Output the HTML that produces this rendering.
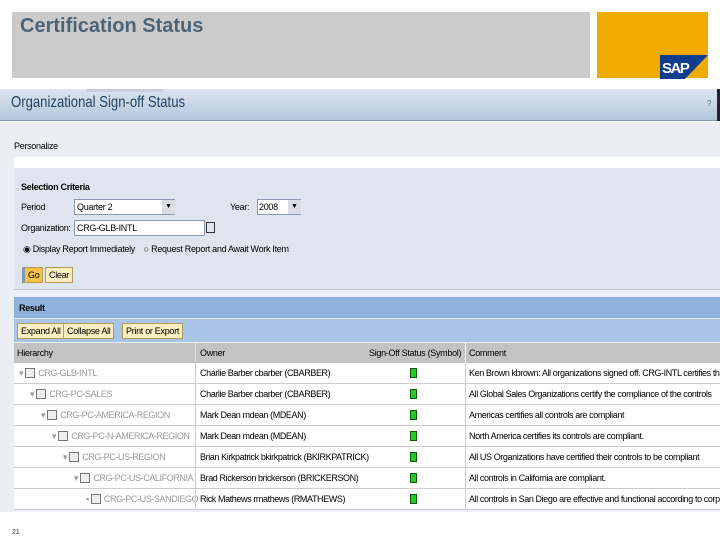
<!DOCTYPE html>
<html><head><meta charset="utf-8"><style>
*{margin:0;padding:0;box-sizing:border-box}
body{width:720px;height:540px;overflow:hidden;background:#fff;font-family:"Liberation Sans",sans-serif;position:relative}
.a{position:absolute}
.t{font-size:9px;color:#000;white-space:nowrap;letter-spacing:-0.3px}
.btn{position:absolute;background:#fbeec0;border:1px solid #b59b55;font-size:9px;height:16px;line-height:14px;padding:0 3px;letter-spacing:-0.3px}
.row{position:absolute;left:14px;width:706px;height:21px;border-bottom:1px solid #ccc;background:#fff}
.row div{position:absolute;top:0;height:20px;line-height:20px;font-size:9px;white-space:nowrap;letter-spacing:-0.4px}
.h{color:#999}
.cb{display:inline-block;width:10px;height:10px;border:1px solid #777;background:#eee;vertical-align:middle;margin-right:3px;margin-top:-2px}
.g{position:absolute;left:396px;top:5px;width:7px;height:10px;background:#22cc22;border:1px solid #115511}
.v1{position:absolute;left:181px;top:0;width:1px;height:21px;background:#ccc}
.v2{position:absolute;left:451px;top:0;width:1px;height:21px;background:#ccc}
</style></head><body>
<div class="a" style="left:12px;top:12px;width:578px;height:66px;background:#cbcbcb"></div>
<div class="a" style="left:20px;top:15px;font-size:20px;font-weight:bold;color:#4d6478">Certification Status</div>
<div class="a" style="left:597px;top:12px;width:111px;height:66px;background:#f0ab00"></div>
<svg class="a" style="left:660px;top:55px" width="48" height="24"><polygon points="0,0 48,0 25,24 0,24" fill="#103d8c"/><text x="2" y="18" font-family="Liberation Sans" font-weight="bold" font-size="15" fill="#fff" letter-spacing="-1.5">SAP</text></svg>
<div class="a" style="left:0;top:89px;width:720px;height:32px;background:linear-gradient(#dbe4ef,#b4c8de);border-bottom:1px solid #7f98b6"></div>
<div class="a" style="left:87px;top:89px;width:76px;height:3px;background:#c6cfdb"></div>
<div class="a" style="left:11px;top:94px;font-size:16px;color:#26435f;transform:scaleX(0.82);transform-origin:left">Organizational Sign-off Status</div>
<div class="a" style="left:707px;top:99px;font-size:8px;color:#5a6b80">?</div>
<div class="a" style="left:717px;top:89px;width:3px;height:32px;background:#223;"></div>
<div class="a" style="left:0;top:122px;width:720px;height:418px;background:#f4f5fa"></div>
<div class="a" style="left:0;top:122px;width:720px;height:390px;background:#eceef6"></div>
<div class="a t" style="left:14px;top:141px">Personalize</div>
<div class="a" style="left:14px;top:157px;width:706px;height:11px;background:#fff"></div>
<div class="a" style="left:14px;top:168px;width:706px;height:122px;background:#dfe5ee;border-bottom:1px solid #c0c8d4"></div>
<div class="a t" style="left:21px;top:182px;font-weight:bold">Selection Criteria</div>
<div class="a t" style="left:21px;top:202px">Period</div>
<div class="a" style="left:74px;top:199px;width:101px;height:16px;background:#fff;border:1px solid #8a99ad"></div>
<div class="a t" style="left:77px;top:202px">Quarter 2</div>
<div class="a" style="left:162px;top:200px;width:13px;height:14px;background:#d8dde6;font-size:7px;text-align:center;line-height:14px">▼</div>
<div class="a t" style="left:230px;top:202px">Year:</div>
<div class="a" style="left:257px;top:199px;width:44px;height:16px;background:#fff;border:1px solid #8a99ad"></div>
<div class="a t" style="left:259px;top:202px">2008</div>
<div class="a" style="left:288px;top:200px;width:13px;height:14px;background:#d8dde6;font-size:7px;text-align:center;line-height:14px">▼</div>
<div class="a t" style="left:21px;top:223px">Organization:</div>
<div class="a" style="left:74px;top:220px;width:131px;height:16px;background:#fff;border:1px solid #8a99ad"></div>
<div class="a t" style="left:77px;top:223px">CRG-GLB-INTL</div>
<div class="a" style="left:206px;top:222px;width:9px;height:11px;border:1px solid #333"></div>
<div class="a t" style="left:23px;top:244px">◉ Display Report Immediately &nbsp;&nbsp;&nbsp;○ Request Report and Await Work Item</div>
<div class="btn" style="left:22px;top:267px;background:#f6c24a;border-left:3px solid #7f98b6">Go</div>
<div class="btn" style="left:45px;top:267px">Clear</div>
<div class="a" style="left:14px;top:297px;width:706px;height:21px;background:#8fb2dc"></div>
<div class="a t" style="left:19px;top:303px;font-weight:bold">Result</div>
<div class="a" style="left:14px;top:318px;width:706px;height:24px;background:#a8c5e8;border-top:1px solid #dfe8f4"></div>
<div class="btn" style="left:17px;top:323px">Expand All</div>
<div class="btn" style="left:63px;top:323px">Collapse All</div>
<div class="btn" style="left:122px;top:323px">Print or Export</div>
<div class="a" style="left:14px;top:343px;width:706px;height:20px;background:#c3c3c3"></div>
<div class="a t" style="left:17px;top:348px">Hierarchy</div>
<div class="a" style="left:195px;top:343px;width:1px;height:165px;background:#ddd"></div>
<div class="a t" style="left:200px;top:348px">Owner</div>
<div class="a t" style="left:369px;top:348px">Sign-Off Status (Symbol)</div>
<div class="a" style="left:465px;top:343px;width:1px;height:20px;background:#fff"></div>
<div class="a t" style="left:469px;top:348px">Comment</div>
<div class="row" style="top:363px"><div class="h" style="left:5px">▾ <span class="cb"></span>CRG-GLB-INTL</div><div class="v1"></div><div style="left:186px">Charlie Barber cbarber (CBARBER)</div><span class="g"></span><div class="v2"></div><div style="left:455px">Ken Brown kbrown: All organizations signed off. CRG-INTL certifies tha</div></div>
<div class="row" style="top:384px"><div class="h" style="left:16px">▾ <span class="cb"></span>CRG-PC-SALES</div><div class="v1"></div><div style="left:186px">Charlie Barber cbarber (CBARBER)</div><span class="g"></span><div class="v2"></div><div style="left:455px">All Global Sales Organizations certify the compliance of the controls</div></div>
<div class="row" style="top:405px"><div class="h" style="left:27px">▾ <span class="cb"></span>CRG-PC-AMERICA-REGION</div><div class="v1"></div><div style="left:186px">Mark Dean mdean (MDEAN)</div><span class="g"></span><div class="v2"></div><div style="left:455px">Americas certifies all controls are compliant</div></div>
<div class="row" style="top:426px"><div class="h" style="left:38px">▾ <span class="cb"></span>CRG-PC-N-AMERICA-REGION</div><div class="v1"></div><div style="left:186px">Mark Dean mdean (MDEAN)</div><span class="g"></span><div class="v2"></div><div style="left:455px">North America certifies its controls are compliant.</div></div>
<div class="row" style="top:447px"><div class="h" style="left:49px">▾ <span class="cb"></span>CRG-PC-US-REGION</div><div class="v1"></div><div style="left:186px">Brian Kirkpatrick bkirkpatrick (BKIRKPATRICK)</div><span class="g"></span><div class="v2"></div><div style="left:455px">All US Organizations have certified their controls to be compliant</div></div>
<div class="row" style="top:468px"><div class="h" style="left:60px">▾ <span class="cb"></span>CRG-PC-US-CALIFORNIA</div><div class="v1"></div><div style="left:186px">Brad Rickerson brickerson (BRICKERSON)</div><span class="g"></span><div class="v2"></div><div style="left:455px">All controls in California are compliant.</div></div>
<div class="row" style="top:489px"><div class="h" style="left:72px">▪ <span class="cb"></span>CRG-PC-US-SANDIEGO</div><div class="v1"></div><div style="left:186px">Rick Mathews rmathews (RMATHEWS)</div><span class="g"></span><div class="v2"></div><div style="left:455px">All controls in San Diego are effective and functional according to corp</div></div>
<div class="a" style="left:0;top:512px;width:720px;height:28px;background:#fff"></div>
<div class="a" style="left:12px;top:529px;font-size:7px;color:#333">21</div>
</body></html>
